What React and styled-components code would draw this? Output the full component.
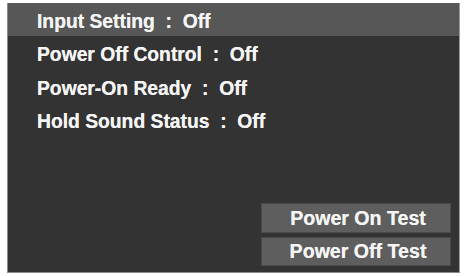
import React from "react";
import styled, { createGlobalStyle } from "styled-components";

const GlobalStyle = createGlobalStyle`
  body {
    margin: 0;
    background: #ffffff;
    font-family: "Liberation Sans", Arial, sans-serif;
  }
`;

const Page = styled.div`
  width: 465px;
  height: 276px;
  padding: 3px 5px 3px 7px;
  box-sizing: border-box;
`;

const Panel = styled.div`
  width: 453px;
  height: 270px;
  box-sizing: border-box;
  background: #333333;
  border-left: 1px solid #8a8a8a;
  border-right: 1px solid #9a9a9a;
  border-bottom: 1px solid #8a8a8a;
  display: flex;
  flex-direction: column;
`;

const MenuList = styled.div`
  display: flex;
  flex-direction: column;
`;

const MenuRow = styled.div`
  height: ${(p) => p.$h}px;
  box-sizing: border-box;
  display: flex;
  align-items: center;
  padding: 4px 0 0 29px;
  background: ${(p) => (p.$active ? "#575757" : "transparent")};
  color: #f4f4f4;
  font-size: 19.3px;
  font-weight: bold;
  white-space: pre;
  text-shadow: 0 0 0.4px #f4f4f4;
`;

const ButtonStack = styled.div`
  margin-top: auto;
  align-self: flex-end;
  display: flex;
  flex-direction: column;
  gap: 4px;
  padding: 0 8px 6px 0;
`;

const TestButton = styled.div`
  width: 190px;
  height: ${(p) => p.$h}px;
  box-sizing: border-box;
  background: #5e5e5e;
  border: 1px solid #4a4a4a;
  color: #f4f4f4;
  font-size: 19.6px;
  font-weight: bold;
  text-shadow: 0 0 0.4px #f4f4f4;
  display: flex;
  align-items: center;
  justify-content: center;
  padding-left: 4px;
`;

const rows = [
  { label: "Input Setting  :  Off", h: 33, active: true },
  { label: "Power Off Control  :  Off", h: 34 },
  { label: "Power-On Ready  :  Off", h: 34 },
  { label: "Hold Sound Status  :  Off", h: 32 },
];

export default function App() {
  return (
    <>
      <GlobalStyle />
      <Page>
        <Panel>
          <MenuList>
            {rows.map((r) => (
              <MenuRow key={r.label} $h={r.h} $active={r.active}>
                {r.label}
              </MenuRow>
            ))}
          </MenuList>
          <ButtonStack>
            <TestButton $h={30}>Power On Test</TestButton>
            <TestButton $h={29}>Power Off Test</TestButton>
          </ButtonStack>
        </Panel>
      </Page>
    </>
  );
}
